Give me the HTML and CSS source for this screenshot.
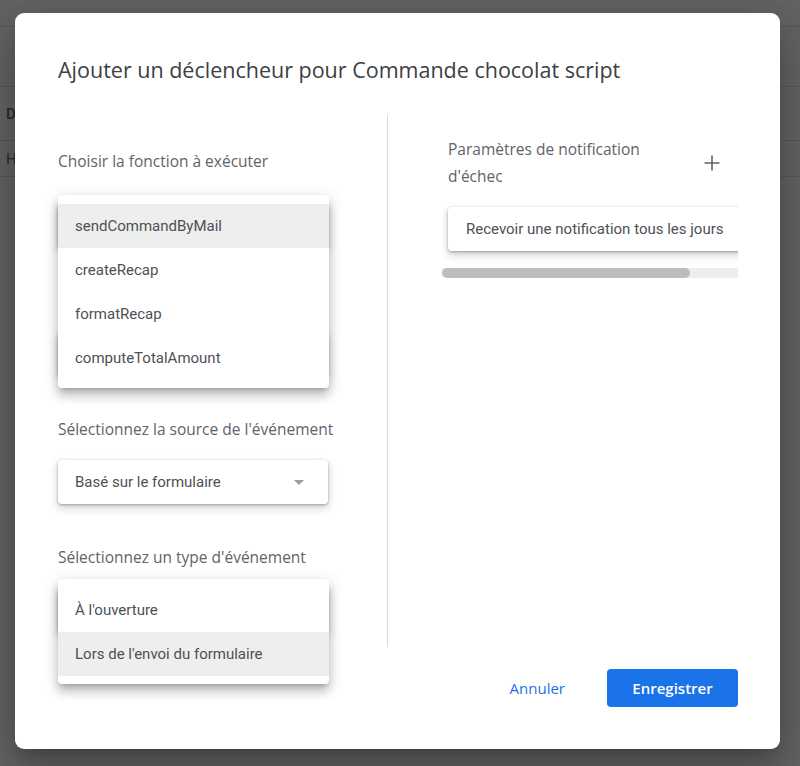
FILE: index.html
```html
<!DOCTYPE html>
<html lang="fr">
<head>
<meta charset="utf-8">
<title>Ajouter un déclencheur</title>
<link rel="stylesheet" href="styles.css">
</head>
<body>
<div class="page">
  <div class="bg-row bg-r1"></div>
  <div class="bg-row bg-r2"></div>
  <div class="bg-row bg-r3"><span class="bg-head">Déploiement</span></div>
  <div class="bg-row bg-r4"><span class="bg-cell">Head</span></div>
  <div class="bg-row bg-r5"></div>
</div>

<div class="dialog">
  <h1 class="title">Ajouter un déclencheur pour Commande chocolat script</h1>
  <div class="columns">
    <div class="col-left">
      <div class="label">Choisir la fonction à exécuter</div>
      <div class="field field-first">
        <div class="select"></div>
        <div class="menu">
          <div class="item item-active">sendCommandByMail</div>
          <div class="item">createRecap</div>
          <div class="item">formatRecap</div>
          <div class="item">computeTotalAmount</div>
        </div>
      </div>

      <div class="label label-hidden"></div>
      <div class="field">
        <div class="select"></div>
      </div>

      <div class="label">Sélectionnez la source de l'événement</div>
      <div class="field">
        <div class="select"><span>Basé sur le formulaire</span><span class="arrow"></span></div>
      </div>

      <div class="label">Sélectionnez un type d'événement</div>
      <div class="field">
        <div class="select"></div>
        <div class="menu">
          <div class="item">À l'ouverture</div>
          <div class="item item-active">Lors de l'envoi du formulaire</div>
        </div>
      </div>
    </div>

    <div class="col-right">
      <div class="notif-head">
        <div class="notif-title">Paramètres de notification d'échec</div>
        <button class="add-btn" type="button" aria-label="Ajouter">
          <svg width="24" height="24" viewBox="0 0 24 24"><path d="M12 4.5v15M4.5 12h15" stroke="#5f6368" stroke-width="1.6" fill="none"/></svg>
        </button>
      </div>
      <div class="scroller">
        <div class="notif-box">Recevoir une notification tous les jours</div>
      </div>
      <div class="track"><div class="thumb"></div></div>
    </div>
  </div>

  <div class="footer">
    <button class="btn-text" type="button">Annuler</button>
    <button class="btn-primary" type="button">Enregistrer</button>
  </div>
</div>
</body>
</html>
```

FILE: styles.css
```css
* { box-sizing: border-box; }

html, body {
  margin: 0;
  padding: 0;
  height: 100%;
}

body {
  background: #636363;
  font-family: "Open Sans", Roboto, sans-serif;
  overflow: hidden;
}

/* background page (dimmed) */
.page { width: 800px; }
.bg-row {
  border-bottom: 1px solid #575757;
  display: flex;
  align-items: center;
  padding-left: 6px;
  font-family: Roboto, sans-serif;
  font-size: 15px;
  color: #2a2a2a;
}
.bg-r1 { height: 27px; }
.bg-r2 { height: 60px; }
.bg-r3 { height: 54px; }
.bg-r4 { height: 36px; }
.bg-r5 { height: 60px; border-bottom: none; }
.bg-head { font-weight: 500; }

/* dialog overlay */
.dialog {
  position: absolute;
  left: 15px;
  top: 13px;
  width: 765px;
  height: 736px;
  background: #fff;
  border-radius: 9px;
  padding: 41px 42px 42px 43px;
  box-shadow: 0 11px 15px -7px rgba(0,0,0,.2), 0 24px 38px 3px rgba(0,0,0,.14), 0 9px 46px 8px rgba(0,0,0,.12);
}

.title {
  margin: 0;
  font-family: "Open Sans", sans-serif;
  font-weight: 400;
  font-size: 21.5px;
  line-height: 32px;
  color: #3c4043;
  white-space: nowrap;
}

.columns {
  display: flex;
  margin-top: 29px;
  height: 532px;
}

.col-left {
  width: 330px;
  border-right: 1px solid #dadce0;
  padding-top: 34px;
}

.label {
  font-family: "Open Sans", sans-serif;
  font-size: 15.5px;
  line-height: 24px;
  height: 24px;
  color: #5f6368;
  margin-bottom: 19px;
  white-space: nowrap;
}

.field {
  position: relative;
  width: 270px;
  height: 44px;
  margin-bottom: 41px;
}
.field-first { margin-top: 31px; }

.select {
  height: 44px;
  border-radius: 4px;
  background: #fff;
  box-shadow: 0 1px 3px rgba(0,0,0,.3), 0 4px 8px 1px rgba(0,0,0,.15);
  display: flex;
  align-items: center;
  justify-content: space-between;
  padding: 0 24px 0 17px;
  font-family: Roboto, sans-serif;
  font-size: 15px;
  color: #4d5156;
}

.arrow {
  width: 0;
  height: 0;
  border-left: 5px solid transparent;
  border-right: 5px solid transparent;
  border-top: 5px solid #9e9e9e;
}

.menu {
  position: absolute;
  left: 0;
  top: -9px;
  width: 271px;
  background: #fff;
  border-radius: 4px;
  padding: 9px 0 8px;
  box-shadow: 0 5px 5px -3px rgba(0,0,0,.2), 0 8px 10px 1px rgba(0,0,0,.14), 0 3px 14px 2px rgba(0,0,0,.12);
  z-index: 2;
}

.item {
  height: 44px;
  display: flex;
  align-items: center;
  padding-left: 17px;
  font-family: Roboto, sans-serif;
  font-size: 15px;
  color: #4d5156;
}
.item-active { background: #eeeeee; }

.col-right {
  flex: 1;
  padding-left: 60px;
  padding-top: 21px;
}

.notif-head {
  display: flex;
  align-items: center;
}
.notif-title {
  width: 215px;
  font-family: "Open Sans", sans-serif;
  font-size: 15.5px;
  line-height: 27px;
  color: #5f6368;
}
.add-btn {
  margin-left: auto;
  margin-right: 14px;
  width: 24px;
  height: 24px;
  padding: 0;
  border: none;
  background: none;
  display: flex;
}

.scroller {
  margin-left: -6px;
  width: 296px;
  overflow: hidden;
  padding: 17px 0 17px 6px;
}
.notif-box {
  width: 340px;
  height: 44px;
  border-radius: 4px;
  background: #fff;
  box-shadow: 0 1px 3px rgba(0,0,0,.3), 0 4px 8px 1px rgba(0,0,0,.15);
  display: flex;
  align-items: center;
  padding-left: 18px;
  font-family: Roboto, sans-serif;
  font-size: 15px;
  color: #4d5156;
  white-space: nowrap;
}

.track {
  margin-left: -6px;
  width: 296px;
  height: 10px;
  background: #eeeeee;
  border-radius: 0 0 0 5px;
}
.thumb {
  width: 248px;
  height: 10px;
  border-radius: 5px;
  background: #bdbdbd;
}

.footer {
  display: flex;
  justify-content: flex-end;
  align-items: center;
  margin-top: 22px;
  height: 38px;
}

.btn-text {
  border: none;
  background: none;
  font-family: "Open Sans", sans-serif;
  font-size: 15px;
  font-weight: 500;
  color: #1a73e8;
  padding: 0 16px;
  height: 38px;
  margin-right: 26px;
}

.btn-primary {
  width: 131px;
  height: 38px;
  border: none;
  border-radius: 4px;
  background: #1a73e8;
  color: #fff;
  font-family: "Open Sans", sans-serif;
  font-size: 15px;
  font-weight: 600;
}
```
